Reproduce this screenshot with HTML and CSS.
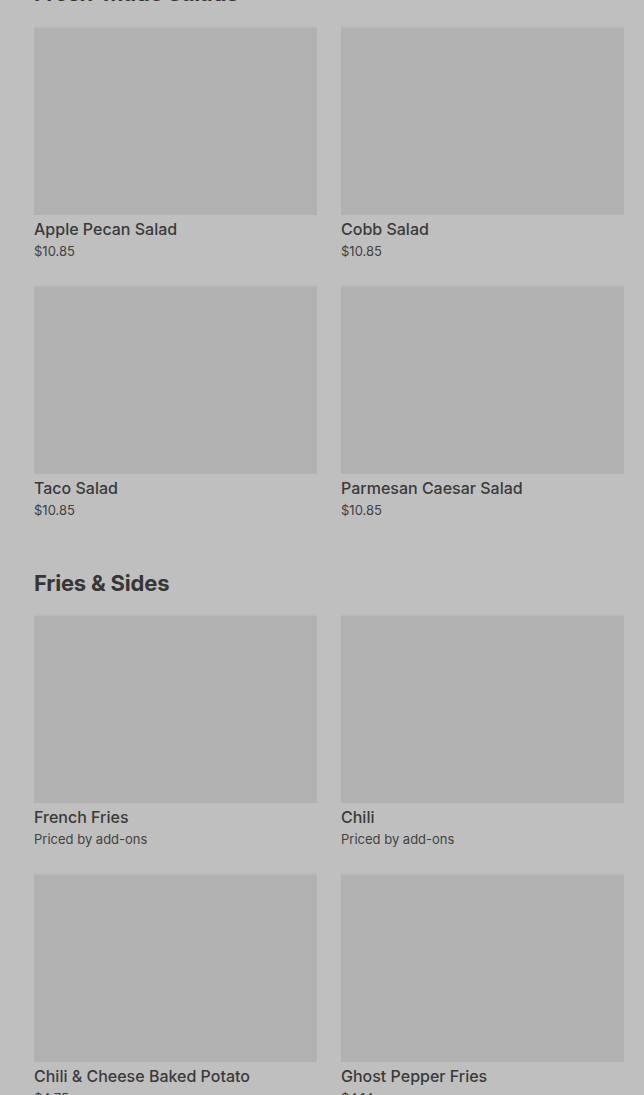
FILE: index.html
```html
<!DOCTYPE html>
<html lang="en">
<head>
<meta charset="utf-8">
<title>Menu</title>
<link rel="stylesheet" href="styles.css">
</head>
<body>
<main class="menu">
  <section class="category first">
    <h2 class="category-title">Fresh-Made Salads</h2>
    <div class="grid">
      <article class="item"><div class="thumb"></div><h3 class="name">Apple Pecan Salad</h3><p class="price">$10.85</p></article>
      <article class="item"><div class="thumb"></div><h3 class="name">Cobb Salad</h3><p class="price">$10.85</p></article>
      <article class="item"><div class="thumb"></div><h3 class="name">Taco Salad</h3><p class="price">$10.85</p></article>
      <article class="item"><div class="thumb"></div><h3 class="name">Parmesan Caesar Salad</h3><p class="price">$10.85</p></article>
    </div>
  </section>
  <section class="category">
    <h2 class="category-title">Fries &amp; Sides</h2>
    <div class="grid">
      <article class="item"><div class="thumb"></div><h3 class="name">French Fries</h3><p class="price">Priced by add-ons</p></article>
      <article class="item"><div class="thumb"></div><h3 class="name">Chili</h3><p class="price">Priced by add-ons</p></article>
      <article class="item"><div class="thumb"></div><h3 class="name">Chili &amp; Cheese Baked Potato</h3><p class="price">$4.75</p></article>
      <article class="item"><div class="thumb"></div><h3 class="name">Ghost Pepper Fries</h3><p class="price">$4.14</p></article>
    </div>
  </section>
</main>
</body>
</html>
```

FILE: styles.css
```css
html, body {
  margin: 0;
  padding: 0;
  background: #bfbfbf;
  overflow: hidden;
}

body {
  font-family: "Inter", "Roboto", "Liberation Sans", sans-serif;
  color: #3b3b3b;
}

.menu {
  padding: 0 20px 0 34px;
  margin-top: -21px;
}

.category + .category {
  margin-top: 50px;
}

.category + .category .category-title {
  margin-bottom: 19px;
}

.category-title {
  margin: 0 0 21px;
  font-size: 22px;
  line-height: 28px;
  font-weight: 700;
  letter-spacing: -0.2px;
  color: #363636;
}

.grid {
  display: grid;
  grid-template-columns: 1fr 1fr;
  column-gap: 24px;
  row-gap: 27px;
}

.thumb {
  height: 187px;
  background: #b1b1b1;
  box-shadow: 0 -2px 0 #bababa;
}

.name {
  margin: 3px 0 0;
  font-size: 16px;
  line-height: 22px;
  font-weight: 500;
  color: #3a3a3a;
}

.price {
  margin: 2px 0 0;
  font-size: 13px;
  line-height: 18px;
  font-weight: 400;
  color: #424242;
}
```
